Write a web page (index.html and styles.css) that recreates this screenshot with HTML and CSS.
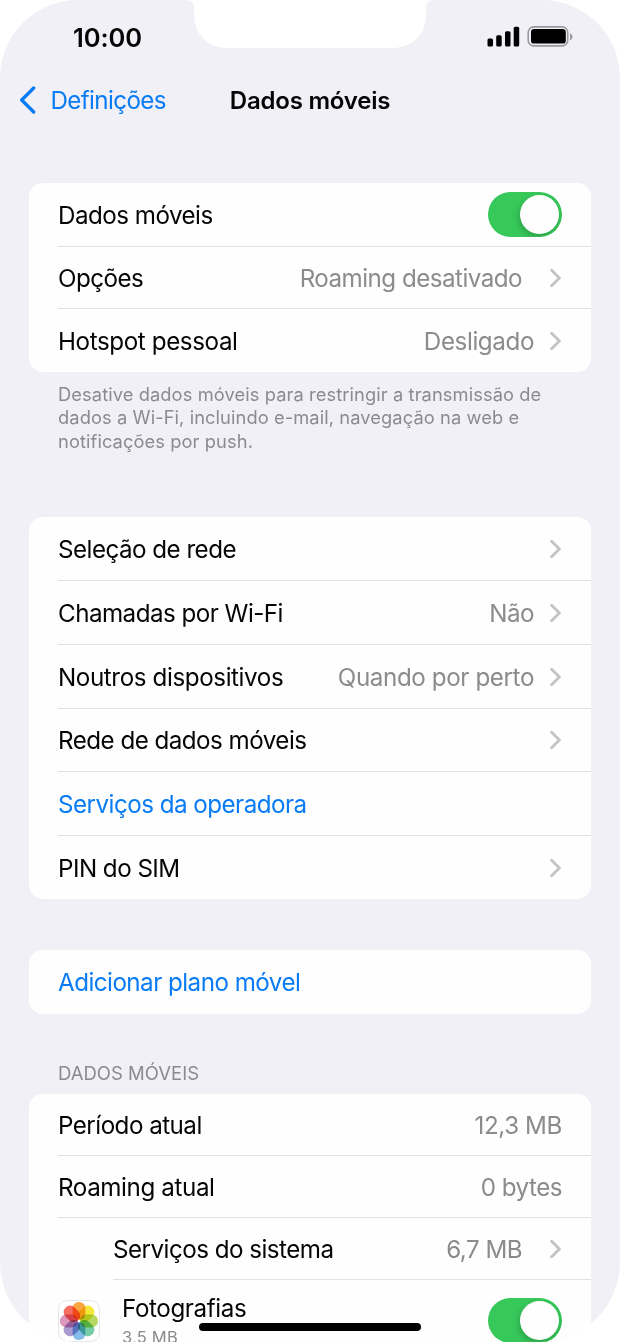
FILE: index.html
```html
<!DOCTYPE html>
<html lang="pt">
<head>
<meta charset="utf-8">
<title>Dados móveis</title>
<link rel="stylesheet" href="styles.css">
</head>
<body>
<svg class="defs" width="0" height="0" aria-hidden="true">
  <symbol id="chevron" viewBox="0 0 12 20"><path d="M1.6 2.2 9.4 10 1.6 17.8" fill="none" stroke="#c3c3c6" stroke-width="2.8" stroke-linecap="round" stroke-linejoin="round"/></symbol>
</svg>
<main class="screen">
  <svg class="notch" viewBox="0 0 248 48" aria-hidden="true"><path d="M0 0Q8 0 8 8V16A32 32 0 0 0 40 48H208A32 32 0 0 0 240 16V8Q240 0 248 0Z" fill="#fff"/></svg>
  <header class="status">
    <span class="time">10:00</span>
    <svg class="indicators" width="88" height="24" viewBox="0 0 88 24" aria-hidden="true">
      <rect x="0.5" y="13.5" width="5.5" height="8" rx="1.5"/>
      <rect x="9.2" y="10.2" width="5.5" height="11.3" rx="1.5"/>
      <rect x="18" y="6.2" width="5.5" height="15.3" rx="1.5"/>
      <rect x="26.7" y="1.8" width="5.5" height="19.7" rx="1.5"/>
      <rect x="41.2" y="1.9" width="39.5" height="19" rx="5.5" fill="none" stroke="#9a9a9d" stroke-width="1.6"/>
      <rect x="44" y="4.1" width="34.8" height="14.5" rx="3.2"/>
      <path d="M83 8.2q2.6 1.2 2.6 3.5t-2.6 3.5z" fill="#9a9a9d"/>
    </svg>
  </header>
  <nav class="nav">
    <a class="back"><svg width="18" height="28" viewBox="0 0 18 28"><path d="M14.7 2 2.7 14 14.7 26" fill="none" stroke="#087bf5" stroke-width="3.3" stroke-linecap="round" stroke-linejoin="round"/></svg><span>Definições</span></a>
    <h1 class="title">Dados móveis</h1>
  </nav>

  <section class="card card-main">
    <div class="row"><span>Dados móveis</span><i class="toggle"></i></div>
    <div class="row"><span>Opções</span><span class="value value-wide">Roaming desativado</span><svg class="chevron"><use href="#chevron"/></svg></div>
    <div class="row"><span class="loose">Hotspot pessoal</span><span class="value loose">Desligado</span><svg class="chevron"><use href="#chevron"/></svg></div>
  </section>
  <p class="note">Desative dados móveis para restringir a transmissão de<br>dados a Wi-Fi, incluindo e-mail, navegação na web e<br>notificações por push.</p>

  <section class="card card-network">
    <div class="row"><span>Seleção de rede</span><svg class="chevron"><use href="#chevron"/></svg></div>
    <div class="row"><span>Chamadas por Wi-Fi</span><span class="value">Não</span><svg class="chevron"><use href="#chevron"/></svg></div>
    <div class="row"><span class="loose">Noutros dispositivos</span><span class="value loose">Quando por perto</span><svg class="chevron"><use href="#chevron"/></svg></div>
    <div class="row"><span>Rede de dados móveis</span><svg class="chevron"><use href="#chevron"/></svg></div>
    <div class="row link"><span>Serviços da operadora</span></div>
    <div class="row"><span>PIN do SIM</span><svg class="chevron"><use href="#chevron"/></svg></div>
  </section>

  <section class="card card-plan">
    <div class="row link"><span>Adicionar plano móvel</span></div>
  </section>

  <h2 class="heading">DADOS MÓVEIS</h2>
  <section class="card card-usage">
    <div class="row"><span>Período atual</span><span class="value loose">12,3 MB</span></div>
    <div class="row"><span class="loose">Roaming atual</span><span class="value">0 bytes</span></div>
    <div class="row indented"><span>Serviços do sistema</span><span class="value value-wide">6,7 MB</span><svg class="chevron"><use href="#chevron"/></svg></div>
    <div class="row app">
      <svg class="photos" width="42" height="42" viewBox="-21 -21 42 42" aria-hidden="true">
        <rect x="-20.5" y="-20.5" width="41" height="41" rx="9" fill="#fff" stroke="#e6e6e8"/>
        <g class="petals">
          <rect x="-6.4" y="-19" width="12.8" height="17.8" rx="6.2" fill="#f9a640"/>
          <rect x="-6.4" y="-19" width="12.8" height="17.8" rx="6.2" fill="#f3e73c" transform="rotate(45)"/>
          <rect x="-6.4" y="-19" width="12.8" height="17.8" rx="6.2" fill="#b9da62" transform="rotate(90)"/>
          <rect x="-6.4" y="-19" width="12.8" height="17.8" rx="6.2" fill="#78cda9" transform="rotate(135)"/>
          <rect x="-6.4" y="-19" width="12.8" height="17.8" rx="6.2" fill="#84bdea" transform="rotate(180)"/>
          <rect x="-6.4" y="-19" width="12.8" height="17.8" rx="6.2" fill="#a99bd0" transform="rotate(225)"/>
          <rect x="-6.4" y="-19" width="12.8" height="17.8" rx="6.2" fill="#de97bc" transform="rotate(270)"/>
          <rect x="-6.4" y="-19" width="12.8" height="17.8" rx="6.2" fill="#f56e61" transform="rotate(315)"/>
        </g>
      </svg>
      <div class="app-text"><span class="loose">Fotografias</span><small>3,5 MB</small></div>
      <i class="toggle"></i>
    </div>
  </section>
  <div class="home"></div>
</main>
</body>
</html>
```
FILE: styles.css
```css
* { box-sizing: border-box; }
body { margin: 0; background: #fff; }
.defs { position: absolute; }
.screen {
  position: relative;
  width: 620px;
  height: 1342px;
  overflow: hidden;
  border-radius: 78px 78px 80px 80px;
  background: #f1f0f6;
  color: #050505;
  font-family: Inter, "Liberation Sans", sans-serif;
  font-size: 24.2px;
  letter-spacing: -0.53px;
}
.loose { letter-spacing: -0.4px; }
.notch { position: absolute; left: 186px; top: 0; width: 248px; height: 48px; }
.status {
  display: flex;
  justify-content: space-between;
  align-items: center;
  height: 74px;
  padding: 0 45px 0 73px;
}
.time { font-size: 25.5px; font-weight: 600; letter-spacing: -0.1px; }
.nav {
  display: grid;
  grid-template-columns: 1fr auto 1fr;
  align-items: center;
  height: 52px;
  padding: 0 19px;
}
.back { display: flex; align-items: center; gap: 13.5px; color: #087bf5; letter-spacing: -0.63px; }
.title { margin: 0; font-size: 24px; font-weight: 600; letter-spacing: -0.22px; }
.card {
  margin: 0 29px;
  border-radius: 14px;
  background: #fefefe;
  display: grid;
  overflow: hidden;
}
.card-main { margin-top: 57px; height: 189px; grid-template-rows: 64px 62px 63px; }
.card-network { margin-top: 64px; height: 382px; grid-template-rows: 64px 64px 64px 63px 64px 63px; }
.card-plan { margin-top: 51px; height: 64px; }
.card-usage { height: 270px; grid-template-rows: 62px 62px 62px 81px; }
.row {
  display: flex;
  align-items: center;
  margin-left: 29px;
  padding-right: 29px;
  border-bottom: 1px solid #e1e1e3;
  white-space: nowrap;
}
.row > span { padding-top: 2px; line-height: 30px; }
.row:last-child { border-bottom: 0; }
.link { color: #087bf5; }
.indented { margin-left: 84px; }
.value { margin-left: auto; color: #8b8b8e; }
.chevron { width: 12px; height: 20px; margin-left: 16px; flex: none; }
.row > span:first-child + .chevron { margin-left: auto; }
.value-wide + .chevron { margin-left: 28px; }
.toggle {
  width: 74px;
  height: 45px;
  margin-left: auto;
  padding: 3px;
  border-radius: 23px;
  background: #37c85a;
  display: flex;
  justify-content: flex-end;
  overflow: hidden;
}
.toggle::before {
  content: "";
  width: 39px;
  height: 39px;
  border-radius: 50%;
  background: #fefefe;
  box-shadow: -1px 3px 7px rgba(0, 0, 0, 0.2);
}
.note {
  margin: 11px 58px 0;
  height: 70px;
  color: #8a8a8f;
  font-size: 18.3px;
  line-height: 23.3px;
  letter-spacing: 0.09px;
  white-space: nowrap;
}
.heading {
  margin: 47px 58px 0;
  height: 33px;
  color: #8a8a8f;
  font-size: 18.5px;
  font-weight: 400;
  line-height: 24px;
  letter-spacing: 0;
}
.photos { flex: none; }
.petals { isolation: isolate; }
.petals rect { mix-blend-mode: multiply; }
.app-text { display: flex; flex-direction: column; margin-left: 22px; padding-top: 3px; }
.app-text span { line-height: 30px; }
.app-text small { font-size: 16.5px; line-height: 27px; color: #8a8a8f; letter-spacing: 0.2px; }
.home {
  position: absolute;
  left: 199px;
  top: 1323px;
  width: 222px;
  height: 8px;
  border-radius: 4px;
  background: #000;
}
```
